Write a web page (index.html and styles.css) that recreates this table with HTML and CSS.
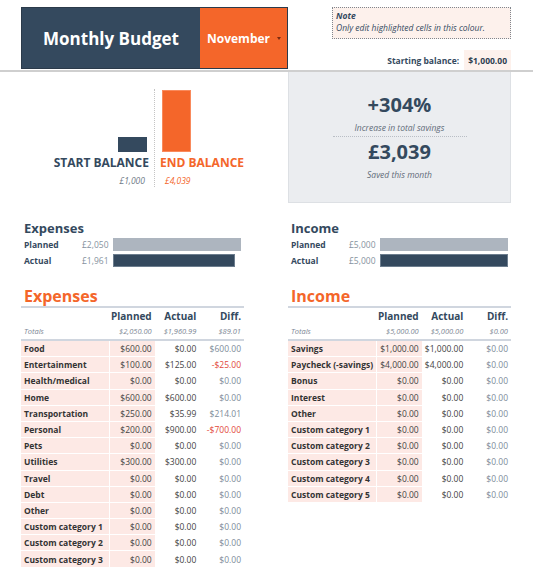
FILE: index.html
```html
<!DOCTYPE html>
<html>
<head>
    <title>Monthly Budget</title>
    <meta name="viewport" content="width=device-width, initial-scale=1">
    <link rel="stylesheet" href="styles.css">
</head>
<body>
    <div class="top">
        <div class="title-block">
            <div class="title">Monthly Budget</div>
            <div class="month">November <span class="caret"></span></div>
        </div>
        <div class="side">
            <div class="note"><b>Note</b><br>Only edit highlighted cells in this colour.</div>
            <div class="start">Starting balance: <span class="start-val">$1,000.00</span></div>
        </div>
    </div>
    <div class="rule"></div>

    <div class="dash">
        <div class="chart">
            <div class="half half-l">
                <div class="bar-area"><div class="cbar cbar-navy" style="height: 15px"></div></div>
                <div class="clabel">START BALANCE</div>
                <div class="camt">&pound;1,000</div>
            </div>
            <div class="half half-r">
                <div class="bar-area"><div class="cbar cbar-orange" style="height: 62px"></div></div>
                <div class="clabel">END BALANCE</div>
                <div class="camt">&pound;4,039</div>
            </div>
        </div>
        <div class="summary">
            <div class="big">+304%</div>
            <div class="small">Increase in total savings</div>
            <div class="dots"></div>
            <div class="big">&pound;3,039</div>
            <div class="small">Saved this month</div>
        </div>
    </div>

    <div class="cols minis">
        <div class="mini">
            <h3>Expenses</h3>
            <div class="mrow">
                <span class="mlabel">Planned</span><span class="mamt">&pound;2,050</span>
                <div class="mtrack"><div class="mbar mbar-gray" style="width: 100%"></div></div>
            </div>
            <div class="mrow">
                <span class="mlabel">Actual</span><span class="mamt">&pound;1,961</span>
                <div class="mtrack"><div class="mbar mbar-navy" style="width: 95.7%"></div></div>
            </div>
        </div>
        <div class="mini">
            <h3>Income</h3>
            <div class="mrow">
                <span class="mlabel">Planned</span><span class="mamt">&pound;5,000</span>
                <div class="mtrack"><div class="mbar mbar-gray" style="width: 100%"></div></div>
            </div>
            <div class="mrow">
                <span class="mlabel">Actual</span><span class="mamt">&pound;5,000</span>
                <div class="mtrack"><div class="mbar mbar-navy" style="width: 100%"></div></div>
            </div>
        </div>
    </div>

    <div class="cols tables">
        <div>
            <h2>Expenses</h2>
            <table>
                <colgroup><col class="c-cat"><col class="c-num"><col class="c-num"><col class="c-num"></colgroup>
                <tr class="head"><th></th><th>Planned</th><th>Actual</th><th>Diff.</th></tr>
                <tr class="totals"><td class="tl">Totals</td><td>$2,050.00</td><td>$1,960.99</td><td>$89.01</td></tr>
                <tr><td class="cat">Food</td><td class="pl">$600.00</td><td class="ac">$0.00</td><td class="df">$600.00</td></tr>
                <tr><td class="cat">Entertainment</td><td class="pl">$100.00</td><td class="ac">$125.00</td><td class="df neg">-$25.00</td></tr>
                <tr><td class="cat">Health/medical</td><td class="pl">$0.00</td><td class="ac">$0.00</td><td class="df">$0.00</td></tr>
                <tr><td class="cat">Home</td><td class="pl">$600.00</td><td class="ac">$600.00</td><td class="df">$0.00</td></tr>
                <tr><td class="cat">Transportation</td><td class="pl">$250.00</td><td class="ac">$35.99</td><td class="df">$214.01</td></tr>
                <tr><td class="cat">Personal</td><td class="pl">$200.00</td><td class="ac">$900.00</td><td class="df neg">-$700.00</td></tr>
                <tr><td class="cat">Pets</td><td class="pl">$0.00</td><td class="ac">$0.00</td><td class="df">$0.00</td></tr>
                <tr><td class="cat">Utilities</td><td class="pl">$300.00</td><td class="ac">$300.00</td><td class="df">$0.00</td></tr>
                <tr><td class="cat">Travel</td><td class="pl">$0.00</td><td class="ac">$0.00</td><td class="df">$0.00</td></tr>
                <tr><td class="cat">Debt</td><td class="pl">$0.00</td><td class="ac">$0.00</td><td class="df">$0.00</td></tr>
                <tr><td class="cat">Other</td><td class="pl">$0.00</td><td class="ac">$0.00</td><td class="df">$0.00</td></tr>
                <tr><td class="cat">Custom category 1</td><td class="pl">$0.00</td><td class="ac">$0.00</td><td class="df">$0.00</td></tr>
                <tr><td class="cat">Custom category 2</td><td class="pl">$0.00</td><td class="ac">$0.00</td><td class="df">$0.00</td></tr>
                <tr><td class="cat">Custom category 3</td><td class="pl">$0.00</td><td class="ac">$0.00</td><td class="df">$0.00</td></tr>
            </table>
        </div>
        <div>
            <h2>Income</h2>
            <table>
                <colgroup><col class="c-cat"><col class="c-num"><col class="c-num"><col class="c-num"></colgroup>
                <tr class="head"><th></th><th>Planned</th><th>Actual</th><th>Diff.</th></tr>
                <tr class="totals"><td class="tl">Totals</td><td>$5,000.00</td><td>$5,000.00</td><td>$0.00</td></tr>
                <tr><td class="cat">Savings</td><td class="pl">$1,000.00</td><td class="ac">$1,000.00</td><td class="df">$0.00</td></tr>
                <tr><td class="cat">Paycheck (-savings)</td><td class="pl">$4,000.00</td><td class="ac">$4,000.00</td><td class="df">$0.00</td></tr>
                <tr><td class="cat">Bonus</td><td class="pl">$0.00</td><td class="ac">$0.00</td><td class="df">$0.00</td></tr>
                <tr><td class="cat">Interest</td><td class="pl">$0.00</td><td class="ac">$0.00</td><td class="df">$0.00</td></tr>
                <tr><td class="cat">Other</td><td class="pl">$0.00</td><td class="ac">$0.00</td><td class="df">$0.00</td></tr>
                <tr><td class="cat">Custom category 1</td><td class="pl">$0.00</td><td class="ac">$0.00</td><td class="df">$0.00</td></tr>
                <tr><td class="cat">Custom category 2</td><td class="pl">$0.00</td><td class="ac">$0.00</td><td class="df">$0.00</td></tr>
                <tr><td class="cat">Custom category 3</td><td class="pl">$0.00</td><td class="ac">$0.00</td><td class="df">$0.00</td></tr>
                <tr><td class="cat">Custom category 4</td><td class="pl">$0.00</td><td class="ac">$0.00</td><td class="df">$0.00</td></tr>
                <tr><td class="cat">Custom category 5</td><td class="pl">$0.00</td><td class="ac">$0.00</td><td class="df">$0.00</td></tr>
            </table>
        </div>
    </div>
</body>
</html>
```

FILE: styles.css
```css
body {
	margin: 0;
	font-family: "Open Sans", Arial, sans-serif;
	color: #34495e;
	background: #fff;
}
/* header */
.top {
	display: flex;
	height: 63px;
	padding: 7px 22px 0 21px;
}
.title-block {
	display: flex;
	width: 267px;
	height: 62px;
	box-sizing: border-box;
	border: 1px solid #2b3a4a;
}
.title {
	flex: 1;
	display: flex;
	align-items: center;
	justify-content: center;
	background-color: #34495e;
	color: #fff;
	font-size: 17px;
	font-weight: 700;
}
.month {
	position: relative;
	width: 87px;
	display: flex;
	align-items: center;
	padding-left: 7px;
	box-sizing: border-box;
	background-color: #f4662a;
	color: #fff;
	font-size: 12px;
	font-weight: 700;
}
.caret {
	position: absolute;
	right: 6px;
	top: 29px;
	border-top: 3px solid #7a2a10;
	border-left: 2px solid transparent;
	border-right: 2px solid transparent;
}
.side {
	margin-left: auto;
	width: 179px;
	display: flex;
	flex-direction: column;
	align-items: flex-end;
}
.note {
	width: 179px;
	height: 32px;
	box-sizing: border-box;
	padding: 2px 3px;
	border: 1px dotted #80868e;
	background-color: #fdf1ec;
	font-size: 8.5px;
	font-style: italic;
	line-height: 12px;
}
.start {
	margin-top: 11px;
	display: flex;
	align-items: center;
	font-size: 8.5px;
	font-weight: 700;
}
.start-val {
	height: 20px;
	display: flex;
	align-items: center;
	margin-left: 5px;
	padding: 0 4px;
	background-color: #fdf1ec;
	color: #2c3e50;
}
.rule {
	height: 2px;
	background-color: #cfcfcf;
}
/* dashboard */
.dash {
	display: flex;
	height: 131px;
	margin-left: 21px;
}
.chart {
	width: 267px;
	display: flex;
	align-items: flex-start;
	padding-top: 17px;
}
.half {
	height: 98px;
	display: flex;
	flex-direction: column;
}
.half-l {
	width: 133px;
	align-items: flex-end;
}
.half-r {
	flex: 1;
	border-left: 1px dotted #c4c4c4;
	align-items: flex-start;
}
.bar-area {
	height: 63px;
	display: flex;
	align-items: flex-end;
}
.cbar {
	width: 29px;
}
.cbar-navy {
	margin-right: 7px;
	background-color: #34495e;
}
.cbar-orange {
	margin-left: 7px;
	background-color: #f4662a;
	box-shadow: inset 0 0 0 1px #f98a5c;
}
.clabel {
	margin-top: 3px;
	font-size: 12px;
	font-weight: 700;
	line-height: 16px;
}
.half-l .clabel {
	padding-right: 5px;
}
.half-r .clabel {
	padding-left: 5px;
	color: #f4662a;
}
.camt {
	margin-top: 4px;
	font-size: 8.5px;
	font-style: italic;
	color: #6f7b88;
}
.half-l .camt {
	padding-right: 9px;
}
.half-r .camt {
	padding-left: 10px;
	color: #f4662a;
}
.summary {
	width: 223px;
	box-sizing: border-box;
	padding-top: 21px;
	border: 1px solid #dde0e4;
	border-top: none;
	background-color: #ebedf0;
	text-align: center;
}
.big {
	font-size: 20px;
	font-weight: 700;
	line-height: 24px;
}
.small {
	margin-top: 5px;
	font-size: 8.5px;
	font-style: italic;
	color: #5f6b78;
}
.dots {
	width: 134px;
	margin: 3px auto 3px;
	border-top: 1px dotted #b9bec5;
}
/* two columns */
.cols {
	display: grid;
	grid-template-columns: 223px 223px;
	column-gap: 44px;
	margin-left: 21px;
}
.minis {
	margin-top: 17px;
}
.mini {
	padding: 0 3px;
}
.mini h3 {
	margin: 0 0 2px;
	font-size: 13px;
	line-height: 16px;
}
.mrow {
	display: flex;
	align-items: center;
	height: 13px;
	margin-bottom: 3px;
	font-size: 8.5px;
}
.mlabel {
	width: 58px;
	font-weight: 700;
}
.mamt {
	width: 26px;
	color: #8793a0;
}
.mtrack {
	flex: 1;
	height: 13px;
	margin-left: 5px;
}
.mbar {
	height: 100%;
	box-sizing: border-box;
}
.mbar-gray {
	background-color: #adb5bf;
}
.mbar-navy {
	background-color: #34495e;
	border: 1px solid #6c7d8e;
}
/* tables */
.tables {
	margin-top: 16px;
}
.tables h2 {
	margin: 0;
	padding-left: 3px;
	font-size: 16px;
	line-height: 20px;
	color: #f4662a;
	border-bottom: 2px solid #d0d6df;
}
table {
	width: 223px;
	table-layout: fixed;
	border-collapse: separate;
	border-spacing: 0;
	font-size: 8.5px;
}
.c-cat {
	width: 89px;
}
.c-num {
	width: 44.6px;
}
th {
	height: 15px;
	padding: 0 3px 0 0;
	text-align: right;
	font-size: 10px;
	font-weight: 700;
}
td {
	height: 15.2px;
	padding: 0 3px;
	text-align: right;
	border-bottom: 1px solid #fff;
	color: #444;
	white-space: nowrap;
}
.totals td {
	height: 16px;
	font-size: 7.5px;
	font-style: italic;
	color: #7d8794;
	border-bottom: 2px solid #d0d6df;
}
.totals .tl {
	text-align: left;
}
.cat {
	text-align: left;
	font-weight: 700;
	color: #333;
	background-color: #fde9e5;
	border-right: 1px solid #fff;
}
.pl {
	background-color: #fde9e5;
}
.df {
	color: #7d8b99;
}
.neg {
	color: #e2473a;
}
```
